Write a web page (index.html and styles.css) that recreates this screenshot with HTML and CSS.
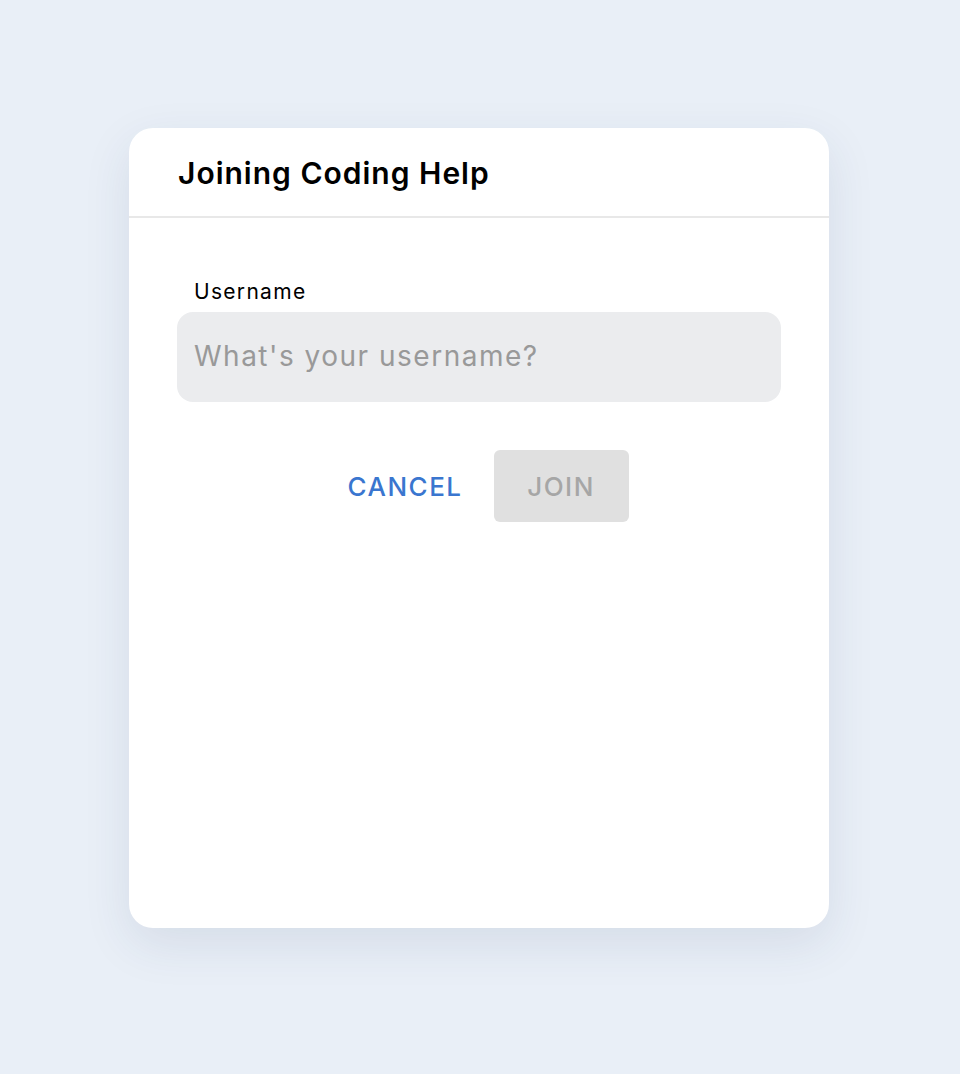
FILE: index.html
```html
<!DOCTYPE html>
<html>
<head>
<meta charset="utf-8">
<link rel="stylesheet" href="styles.css">
</head>
<body>
<div class="page">
  <div class="card">
    <div class="card-header">
      <h1 class="title">Joining Coding Help</h1>
    </div>
    <div class="card-body">
      <label class="label">Username</label>
      <div class="input">What's your username?</div>
      <div class="actions">
        <button class="btn btn-cancel">CANCEL</button>
        <button class="btn btn-join">JOIN</button>
      </div>
    </div>
  </div>
</div>
</body>
</html>
```
FILE: styles.css
```css
html, body {
  margin: 0;
  padding: 0;
  background: #e9eff7;
  font-family: "Inter", "Noto Sans", sans-serif;
}
.page {
  height: 1074px;
  padding-top: 128px;
  padding-left: 129px;
  box-sizing: border-box;
}
.card {
  width: 700px;
  height: 800px;
  background: #ffffff;
  border-radius: 24px;
  box-shadow: 0 16px 48px rgba(40, 60, 100, 0.10);
}
.card-header {
  height: 88px;
  border-bottom: 2px solid #e8e8e8;
  padding-left: 49px;
  display: flex;
  align-items: center;
}
.title {
  margin: 2px 0 0 0;
  font-size: 30px;
  font-weight: 600;
  color: #000;
  letter-spacing: 1px;
}
.card-body {
  padding: 59px 48px 0 48px;
}
.label {
  display: block;
  padding-left: 17px;
  font-size: 21px;
  line-height: 30px;
  color: #000;
  letter-spacing: 1.3px;
  margin-bottom: 5px;
}
.input {
  height: 90px;
  background: #ebecee;
  border-radius: 16px;
  padding-left: 17px;
  padding-bottom: 3px;
  box-sizing: border-box;
  display: flex;
  align-items: center;
  font-size: 28px;
  letter-spacing: 1.5px;
  color: #999999;
}
.actions {
  display: flex;
  justify-content: center;
  gap: 31px;
  margin-top: 48px;
  padding-left: 18px;
}
.btn {
  border: none;
  font-family: inherit;
  font-size: 26px;
  font-weight: 500;
  height: 72px;
  border-radius: 6px;
  letter-spacing: 1.5px;
}
.btn-cancel {
  background: transparent;
  color: #3a76cf;
  padding: 0;
}
.btn-join {
  background: #e0e0e0;
  color: #a6a6a6;
  width: 135px;
}
```
